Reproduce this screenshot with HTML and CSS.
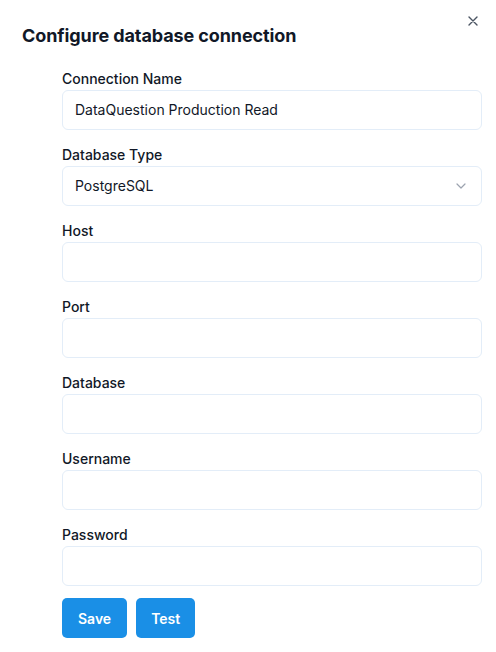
FILE: index.html
```html
<!DOCTYPE html>
<html>
<head>
<meta charset="utf-8">
<link rel="stylesheet" href="styles.css">
</head>
<body>
<div class="dialog">
  <button class="close" aria-label="Close">
    <svg width="10" height="10" viewBox="0 0 10 10"><path d="M1 1L9 9M9 1L1 9" stroke="#4b5563" stroke-width="1.4" stroke-linecap="round"/></svg>
  </button>
  <h1 class="title">Configure database connection</h1>
  <form class="form">
    <div class="field">
      <label class="label">Connection Name</label>
      <div class="input">DataQuestion Production Read</div>
    </div>
    <div class="field">
      <label class="label">Database Type</label>
      <div class="input select">PostgreSQL
        <svg class="chev" width="10" height="6" viewBox="0 0 10 6"><path d="M1 1L5 5L9 1" fill="none" stroke="#9ca3af" stroke-width="1.2" stroke-linecap="round" stroke-linejoin="round"/></svg>
      </div>
    </div>
    <div class="field"><label class="label">Host</label><div class="input"></div></div>
    <div class="field"><label class="label">Port</label><div class="input"></div></div>
    <div class="field"><label class="label">Database</label><div class="input"></div></div>
    <div class="field"><label class="label">Username</label><div class="input"></div></div>
    <div class="field"><label class="label">Password</label><div class="input"></div></div>
    <div class="actions">
      <button type="button" class="btn">Save</button>
      <button type="button" class="btn">Test</button>
    </div>
  </form>
</div>
</body>
</html>
```
FILE: styles.css
```css
* { box-sizing: border-box; }
html, body { margin: 0; padding: 0; background: #fff; }
body { font-family: Inter, "Noto Sans", sans-serif; color: #111827; }
.dialog { position: relative; padding: 22px 14px 0 22px; }
.close { position: absolute; top: 16px; right: 18px; width: 10px; height: 10px; padding: 0; border: 0; background: none; display: flex; }
.title { margin: 0; font-size: 18px; line-height: 28px; font-weight: 700; color: #111827; letter-spacing: -0.1px; }
.form { margin: 18px 0 0 40px; display: flex; flex-direction: column; }
.field { display: flex; flex-direction: column; gap: 1px; margin-bottom: 14px; }
.field:nth-last-child(2) { margin-bottom: 12px; }
.label { font-size: 14px; line-height: 20px; padding-top: 1px; font-weight: 500; color: #111827; }
.input { height: 40px; border: 1px solid #e3edf8; border-radius: 6px; padding: 0 12px; font-size: 14px; line-height: 38px; color: #111827; display: flex; align-items: center; }
.select { justify-content: space-between; }
.chev { margin-right: 3px; }
.actions { display: flex; gap: 9px; }
.btn { height: 40px; padding: 0 16px; border: 0; border-radius: 5px; background: #1a8fe6; color: #fff; font-family: Inter, sans-serif; font-size: 14px; font-weight: 600; }
.btn + .btn { padding: 0 15px; }
```
